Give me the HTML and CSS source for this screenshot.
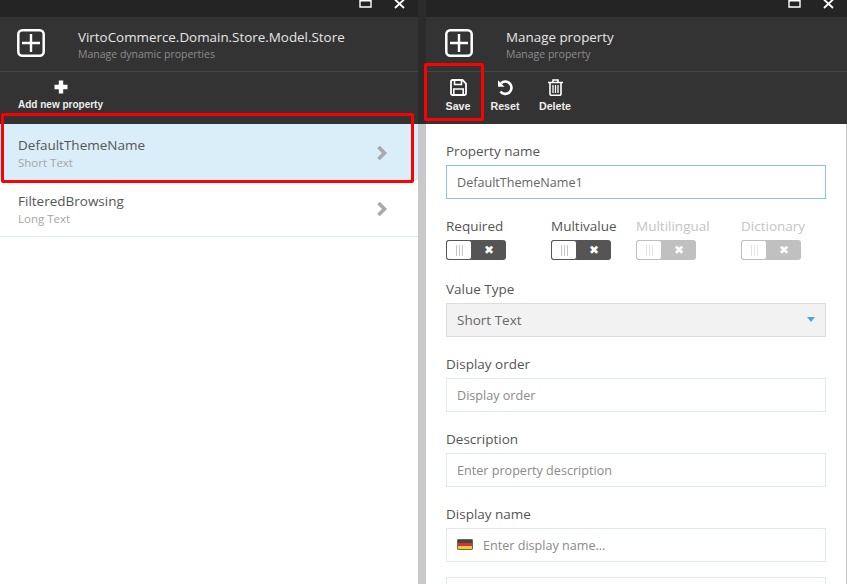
FILE: index.html
```html
<!DOCTYPE html>
<html>

<head>
    <meta name="viewport" content="width=device-width, initial-scale=1.0" />
    <title>Manage property</title>
    <link rel="stylesheet" href="styles.css">
</head>

<body>
    <div class="blade blade-left">
        <div class="topbar">
            <svg class="win-icon" width="13" height="9" viewBox="0 0 13 9"><path d="M1 0h11v7H1z" fill="none" stroke="#fff" stroke-width="1.400"/><path d="M1 0h11v1.500H1z" fill="#fff"/></svg>
            <svg class="win-icon close" width="11" height="9" viewBox="0 0 11 9"><path d="M1 -.5l9 8.500M10 -.5L1 8" stroke="#fff" stroke-width="1.800"/></svg>
        </div>
        <div class="head">
            <svg class="head-icon" width="28" height="28" viewBox="0 0 28 28"><rect x="1.300" y="1.300" width="25.400" height="25.400" rx="4" fill="none" stroke="#fff" stroke-width="2.500"/><path d="M14 5v18M5 14h18" stroke="#fff" stroke-width="2.400"/></svg>
            <div class="head-text">
                <div class="head-title">VirtoCommerce.Domain.Store.Model.Store</div>
                <div class="head-sub">Manage dynamic properties</div>
            </div>
        </div>
        <div class="toolbar">
            <div class="tool tool-add">
                <svg width="16" height="16" viewBox="0 0 16 16"><path d="M8 1.500v13M1.500 8h13" stroke="#fff" stroke-width="4.400"/></svg>
                <span>Add new property</span>
            </div>
        </div>
        <div class="list">
            <div class="row row-active">
                <div>
                    <div class="row-name">DefaultThemeName</div>
                    <div class="row-type">Short Text</div>
                </div>
                <svg class="chev" width="12" height="16" viewBox="0 0 12 16"><path d="M2.500 2l6 6-6 6" fill="none" stroke="#a9a9a9" stroke-width="3.600"/></svg>
            </div>
            <div class="row">
                <div>
                    <div class="row-name">FilteredBrowsing</div>
                    <div class="row-type">Long Text</div>
                </div>
                <svg class="chev" width="12" height="16" viewBox="0 0 12 16"><path d="M2.500 2l6 6-6 6" fill="none" stroke="#a9a9a9" stroke-width="3.600"/></svg>
            </div>
        </div>
        <div class="mark mark-row"></div>
    </div>

    <div class="blade blade-right">
        <div class="topbar">
            <svg class="win-icon" width="13" height="9" viewBox="0 0 13 9"><path d="M1 0h11v7H1z" fill="none" stroke="#fff" stroke-width="1.400"/><path d="M1 0h11v1.500H1z" fill="#fff"/></svg>
            <svg class="win-icon close" width="11" height="9" viewBox="0 0 11 9"><path d="M1 -.5l9 8.500M10 -.5L1 8" stroke="#fff" stroke-width="1.800"/></svg>
        </div>
        <div class="head head-right">
            <svg class="head-icon" width="28" height="28" viewBox="0 0 28 28"><rect x="1.300" y="1.300" width="25.400" height="25.400" rx="4" fill="none" stroke="#fff" stroke-width="2.500"/><path d="M14 5v18M5 14h18" stroke="#fff" stroke-width="2.400"/></svg>
            <div class="head-text">
                <div class="head-title">Manage property</div>
                <div class="head-sub">Manage property</div>
            </div>
        </div>
        <div class="toolbar">
            <div class="tool tool-save">
                <svg width="17" height="17" viewBox="0 0 17 17"><path d="M1 2.500A1.500 1.500 0 0 1 2.500 1h10L16 4.500v10a1.500 1.500 0 0 1-1.500 1.500h-12A1.500 1.500 0 0 1 1 14.500z" fill="none" stroke="#fff" stroke-width="1.800"/><path d="M4.500 1.500v4h7v-4M3.800 15.500V10h9.400v5.500" fill="none" stroke="#fff" stroke-width="1.600"/></svg>
                <span>Save</span>
            </div>
            <div class="tool tool-reset">
                <svg width="17" height="17" viewBox="0 0 17 17"><path d="M4 4.200A6.200 6.200 0 1 1 3.400 12.500" fill="none" stroke="#fff" stroke-width="2.600"/><path d="M1 1.200v6.500h6.500z" fill="#fff"/></svg>
                <span>Reset</span>
            </div>
            <div class="tool tool-delete">
                <svg width="15" height="17" viewBox="0 0 15 17"><path d="M0 3.500h15M5 3.500V1h5v2.500" fill="none" stroke="#fff" stroke-width="1.600"/><path d="M2 3.500V15a1.300 1.300 0 0 0 1.300 1.300h8.400A1.300 1.300 0 0 0 13 15V3.500" fill="none" stroke="#fff" stroke-width="1.600"/><path d="M5 6v8M7.500 6v8M10 6v8" stroke="#fff" stroke-width="1.300"/></svg>
                <span>Delete</span>
            </div>
        </div>
        <div class="form">
            <div class="field">
                <label class="lbl">Property name</label>
                <div class="input input-focus">DefaultThemeName1</div>
            </div>
            <div class="switches">
                <div class="sw-item sw-wide">
                    <div class="lbl">Required</div>
                    <div class="switch"><div class="knob"><i></i><i></i><i></i></div><div class="off">&#10006;</div></div>
                </div>
                <div class="sw-item">
                    <div class="lbl">Multivalue</div>
                    <div class="switch"><div class="knob"><i></i><i></i><i></i></div><div class="off">&#10006;</div></div>
                </div>
                <div class="sw-item sw-wide sw-disabled">
                    <div class="lbl">Multilingual</div>
                    <div class="switch"><div class="knob"><i></i><i></i><i></i></div><div class="off">&#10006;</div></div>
                </div>
                <div class="sw-item sw-disabled">
                    <div class="lbl">Dictionary</div>
                    <div class="switch"><div class="knob"><i></i><i></i><i></i></div><div class="off">&#10006;</div></div>
                </div>
            </div>
            <div class="field">
                <label class="lbl">Value Type</label>
                <div class="input select">Short Text<span class="caret"></span></div>
            </div>
            <div class="field">
                <label class="lbl">Display order</label>
                <div class="input placeholder">Display order</div>
            </div>
            <div class="field">
                <label class="lbl">Description</label>
                <div class="input placeholder">Enter property description</div>
            </div>
            <div class="field field-name">
                <label class="lbl">Display name</label>
                <div class="input placeholder">
                    <span class="flag"><i class="flag-b"></i><i class="flag-r"></i><i class="flag-y"></i></span>
                    Enter display name...
                </div>
            </div>
            <div class="input"></div>
        </div>
        <div class="mark mark-save"></div>
    </div>
</body>

</html>
```
FILE: styles.css
```css
html, body {
    margin: 0;
    height: 100%;
    overflow: hidden;
}

body {
    display: flex;
    gap: 8px;
    background: linear-gradient(#2b2b2b 124px, #c9c9c9 124px);
    font-family: "Open Sans", sans-serif;
    color: #444444;
}

.blade {
    position: relative;
    background-color: #ffffff;
    height: 584px;
}

.blade-left {
    width: 418px;
}

.blade-right {
    flex: 1;
}

.topbar {
    height: 17px;
    background-color: #242424;
    display: flex;
    justify-content: flex-end;
    align-items: flex-start;
    overflow: hidden;
}

.win-icon {
    margin-right: 22px;
}

.win-icon.close {
    margin-right: 13px;
}

.head {
    height: 54px;
    background-color: #333333;
    border-bottom: 1px solid #454545;
    display: flex;
    align-items: center;
    padding-left: 17px;
}

.head-right {
    padding-left: 19px;
}

.head-icon {
    margin-top: -3px;
}

.head-text {
    margin-left: 33px;
}

.head-title {
    font-size: 13.400px;
    line-height: 20px;
    color: #e6e6e6;
}

.head-sub {
    font-size: 10.500px;
    line-height: 14px;
    color: #8c8c8c;
}

.toolbar {
    height: 52px;
    background-color: #333333;
    display: flex;
}

.tool {
    display: flex;
    flex-direction: column;
    align-items: center;
    padding-top: 7px;
    font-family: "Liberation Sans", sans-serif;
    font-size: 10.700px;
    font-weight: bold;
    color: #eeeeee;
}

.tool span {
    margin-top: 3px;
    line-height: 14px;
}

.tool-add {
    margin-left: 18px;
    font-size: 10px;
}

.tool-save {
    width: 50px;
    margin-left: 7px;
}

.tool-reset {
    width: 44px;
}

.tool-delete {
    width: 56px;
}

.row {
    height: 44px;
    border-bottom: 1px solid #dee9f0;
    display: flex;
    justify-content: space-between;
    align-items: flex-start;
    padding: 12px 30px 0 18px;
    background-color: #ffffff;
}

.row-active {
    background-color: #d9eef9;
    border-bottom: 0;
}

.chev {
    margin-top: 9px;
}

.row-name {
    font-size: 13.500px;
    line-height: 18px;
    color: #555555;
}

.row-type {
    margin-top: 1px;
    font-size: 11.500px;
    line-height: 16px;
    color: #a5a5a5;
}

.mark {
    position: absolute;
    border: 3px solid #ff0000;
    box-sizing: border-box;
    border-radius: 2px;
}

.mark-row {
    left: 1px;
    top: 113px;
    width: 413px;
    height: 70px;
}

.mark-save {
    left: -2px;
    top: 63px;
    width: 60px;
    height: 58px;
}

.form {
    box-sizing: border-box;
    height: 460px;
    padding: 18px 20px 0;
    border-right: 1px solid #c9c9c9;
    overflow: hidden;
}

.lbl {
    display: block;
    font-size: 13.500px;
    line-height: 18px;
    color: #555555;
}

.field {
    margin-bottom: 18px;
}

.field-name {
    margin-bottom: 15px;
}

.field .lbl {
    margin-bottom: 5px;
}

.input {
    box-sizing: border-box;
    height: 34px;
    border: 1px solid #dee9f0;
    padding: 0 10px;
    display: flex;
    align-items: center;
    font-size: 12.600px;
    color: #666666;
    background-color: #ffffff;
}

.input-focus {
    border-color: #8fc3dd;
}

.placeholder {
    color: #8a8a8a;
}

.select {
    position: relative;
    font-size: 13.500px;
    background-color: #f2f2f2;
    border-color: #dcdcdc;
}

.caret {
    position: absolute;
    right: 10px;
    top: 13px;
    border-left: 4px solid transparent;
    border-right: 4px solid transparent;
    border-top: 5px solid #43a8e0;
}

.flag {
    box-sizing: border-box;
    display: inline-flex;
    flex-direction: column;
    width: 16px;
    height: 11px;
    margin-right: 10px;
    margin-top: -1px;
    border: 1px solid #6b6b50;
    border-radius: 1px;
    overflow: hidden;
}

.flag i {
    flex: 1;
}

.flag-b { background-color: #444444; }
.flag-r { background-color: #d2352a; }
.flag-y { background-color: #f3c63c; }

.switches {
    display: flex;
    margin-bottom: 20px;
}

.sw-item {
    flex: none;
    width: 85px;
}

.sw-item.sw-wide {
    width: 105px;
}

.sw-disabled .lbl {
    color: #c4c4c4;
}

.switch {
    margin-top: 5px;
    width: 60px;
    height: 20px;
    background-color: #555555;
    border-radius: 3px;
    display: flex;
}

.knob {
    box-sizing: border-box;
    width: 26px;
    height: 20px;
    background-color: #ffffff;
    border: 1px solid #555555;
    border-radius: 3px;
    display: flex;
    justify-content: center;
    align-items: center;
    gap: 2px;
}

.knob i {
    width: 1px;
    height: 11px;
    background-color: #c4c4c4;
}

.off {
    flex: 1;
    color: #ffffff;
    font-size: 12px;
    line-height: 20px;
    text-align: center;
    font-family: "DejaVu Sans", sans-serif;
}

.sw-disabled .switch {
    background-color: #c0c0c0;
}

.sw-disabled .knob {
    border-color: #c0c0c0;
}

.sw-disabled .knob i {
    background-color: #e4e4e4;
}
```
